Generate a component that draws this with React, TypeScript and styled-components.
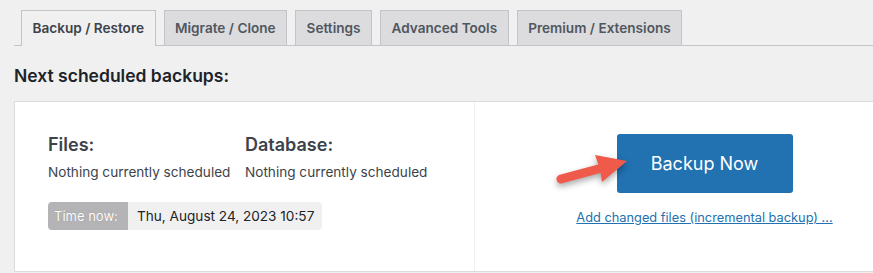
import * as React from 'react';
import styled, { createGlobalStyle } from 'styled-components';

const GlobalStyle = createGlobalStyle`
	html, body {
		margin: 0;
		padding: 0;
		background: #f0f0f1;
		overflow: hidden;
	}
	body {
		font-family: Inter, 'Noto Sans', sans-serif;
		color: #3c434a;
	}
`;

const Page = styled.div`
	width: 873px;
	height: 273px;
	padding: 10px 0 0 14px;
	box-sizing: border-box;
	overflow: hidden;
`;

const TabBar = styled.nav`
	display: flex;
	gap: 8px;
	padding-left: 7px;
	border-bottom: 1px solid #c3c4c7;
	width: 1000px;
`;

const Tab = styled.a<{ $active?: boolean }>`
	display: flex;
	align-items: center;
	height: 34px;
	padding: 0 10.5px;
	border: 1px solid #c3c4c7;
	border-bottom: none;
	margin-bottom: ${p => (p.$active ? '-1px' : '0')};
	padding-bottom: ${p => (p.$active ? '1px' : '0')};
	background: ${p => (p.$active ? '#f0f0f1' : '#dcdcde')};
	color: ${p => (p.$active ? '#3c434a' : '#50575e')};
	font-size: 13.6px;
	font-weight: 600;
	white-space: nowrap;
	text-decoration: none;
	cursor: pointer;
`;

const Heading = styled.h2`
	margin: 19px 0 14px;
	font-size: 17.5px;
	line-height: 22px;
	font-weight: 600;
	color: #1d2327;
`;

const Panel = styled.div`
	position: relative;
	display: flex;
	width: 921px;
	height: 171px;
	box-sizing: border-box;
	background: #fff;
	border: 1px solid #dcdcde;
`;

const LeftCol = styled.div`
	width: 460px;
	box-sizing: border-box;
	padding: 32px 0 0 33px;
	border-right: 1px solid #f0f0f1;
`;

const Schedule = styled.div`
	display: flex;
`;

const ScheduleItem = styled.div<{ $width?: number }>`
	width: ${p => (p.$width ? `${p.$width}px` : 'auto')};
`;

const ItemTitle = styled.h3`
	margin: 0 0 6px;
	font-size: 18px;
	line-height: 22px;
	font-weight: 600;
	color: #3c434a;
`;

const ItemText = styled.div`
	font-size: 13.6px;
	line-height: 20px;
	color: #3c434a;
	white-space: nowrap;
`;

const TimeBadge = styled.div`
	display: inline-flex;
	margin-top: 20px;
	height: 28px;
	border-radius: 4px;
	overflow: hidden;
	font-size: 13.6px;
	white-space: nowrap;
`;

const TimeLabel = styled.span`
	display: flex;
	align-items: center;
	padding: 0 6px;
	width: 80px;
	box-sizing: border-box;
	background: #b4b4b6;
	color: #fff;
	font-size: 13px;
	text-shadow: 0 0 1px rgba(0, 0, 0, 0.25);
`;

const TimeValue = styled.span`
	display: flex;
	align-items: center;
	padding: 0 8px 0 9px;
	width: 194px;
	box-sizing: border-box;
	background: #f0f0f1;
	color: #1d2327;
`;

const RightCol = styled.div`
	flex: 1;
	display: flex;
	flex-direction: column;
	align-items: center;
	padding-top: 32px;
`;

const BackupButton = styled.button`
	width: 176px;
	height: 59px;
	border: none;
	border-radius: 3px;
	background: #2271b1;
	color: #fff;
	font-family: inherit;
	font-size: 18px;
	cursor: pointer;
`;

const IncrementalLink = styled.a`
	margin-top: 16px;
	font-size: 12.8px;
	line-height: 18px;
	color: #2271b1;
	text-decoration: underline;
	white-space: nowrap;
	cursor: pointer;
`;

const Arrow = styled.svg`
	position: absolute;
	left: 535px;
	top: 48px;
	filter: drop-shadow(0 3px 3px rgba(0, 0, 0, 0.35));
	pointer-events: none;
`;

const tabs = ['Backup / Restore', 'Migrate / Clone', 'Settings', 'Advanced Tools', 'Premium / Extensions'];

export default function App() {
	return (
		<>
			<GlobalStyle />
			<Page>
				<TabBar>
					{tabs.map((t, i) => (
						<Tab key={t} $active={i === 0}>
							{t}
						</Tab>
					))}
				</TabBar>
				<Heading>Next scheduled backups:</Heading>
				<Panel>
					<LeftCol>
						<Schedule>
							<ScheduleItem $width={197}>
								<ItemTitle>Files:</ItemTitle>
								<ItemText>Nothing currently scheduled</ItemText>
							</ScheduleItem>
							<ScheduleItem>
								<ItemTitle>Database:</ItemTitle>
								<ItemText>Nothing currently scheduled</ItemText>
							</ScheduleItem>
						</Schedule>
						<TimeBadge>
							<TimeLabel>Time now:</TimeLabel>
							<TimeValue>Thu, August 24, 2023 10:57</TimeValue>
						</TimeBadge>
					</LeftCol>
					<RightCol>
						<BackupButton>Backup Now</BackupButton>
						<IncrementalLink>Add changed files (incremental backup) ...</IncrementalLink>
					</RightCol>
					<Arrow width="80" height="40" viewBox="0 0 80 40">
						<line x1="11" y1="29" x2="52" y2="18" stroke="#ef5a4b" strokeWidth="9" strokeLinecap="round" />
						<polygon points="45,5 77,11 52,32 50,19" fill="#ef5a4b" />
					</Arrow>
				</Panel>
			</Page>
		</>
	);
}
